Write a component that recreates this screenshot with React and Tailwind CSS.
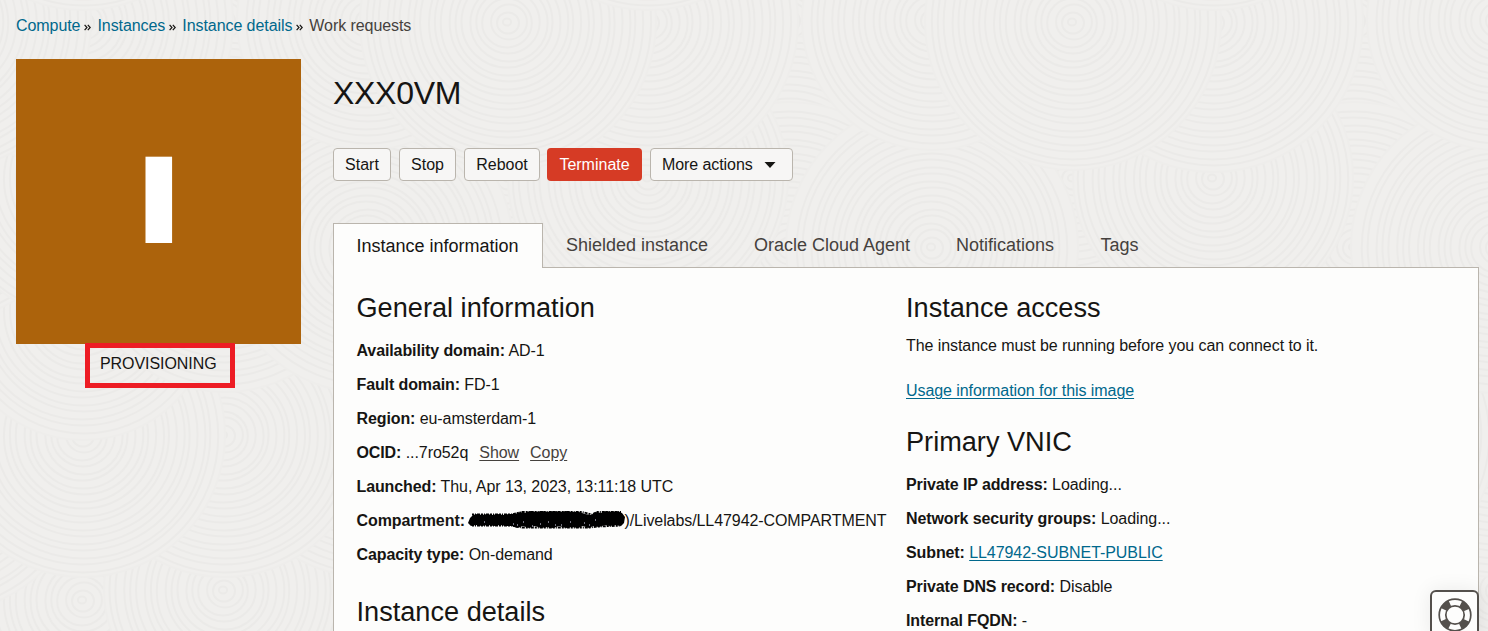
import React from "react";

const TILE_WIDTH = 565;
const TILE_DISCS = [
  [508, 690, 142], [224, 690, 142], [367, 590, 142], [83, 600, 142], [508, 470, 142],
  [508, 330, 142], [224, 590, 120], [224, 20, 140], [367, 435, 142], [224, 435, 142],
  [83, 435, 142], [83, 310, 130], [224, 178, 142], [508, 178, 142], [224, 247, 145],
  [83, 178, 140], [367, 247, 146], [367, 20, 130], [83, 22, 150], [508, 22, 148],
  [83, -138, 148],
];
const TILE_SHIFTS = [-1, 0, 1, 2];

function Backdrop() {
  return (
    <svg className="absolute inset-0 -z-10" width="1488" height="631" aria-hidden="true">
      <rect width="1488" height="631" fill="#f0efed" />
      {TILE_DISCS.flatMap(([cx, cy, r], i) =>
        TILE_SHIFTS.map((n) => {
          const x = cx + n * TILE_WIDTH;
          return (
            <g key={i + ":" + n} fill="none" stroke="#ebeae8" strokeWidth="2">
              <circle cx={x} cy={cy} r={r} fill="#f0efed" stroke="#eeedeb" />
              {Array.from({ length: Math.floor(r / 7) }, (_, k) => (
                <ellipse key={k} cx={x + (k % 3) - 1} cy={cy + (k % 2)} rx={(k + 0.6) * 6.9} ry={(k + 0.5) * 7} />
              ))}
            </g>
          );
        })
      )}
    </svg>
  );
}

function Chevrons() {
  return (
    <svg className="mt-[3px] mr-[6px] ml-1 shrink-0" width="7" height="7" viewBox="0 0 7 7" fill="none" stroke="#161513" strokeWidth="1.2" aria-hidden="true">
      <path d="M.6 .8 3 3.5 .6 6.2M3.8 .8 6.2 3.5 3.8 6.2" />
    </svg>
  );
}

function Field({ label, children }) {
  return (
    <div className="h-[34px] leading-[34px] tracking-[-0.06px] whitespace-nowrap">
      <span className="font-bold tracking-[-0.11px]">{label}:</span> {children}
    </div>
  );
}

function Heading({ children }) {
  return <h2 className="h-[34px] text-[27.15px] leading-[34px] whitespace-nowrap">{children}</h2>;
}

function Scribble() {
  return (
    <svg className="absolute top-[6px] left-[110px]" width="162" height="22" viewBox="0 0 162 22" aria-hidden="true">
      <path
        d="M1 13 3 8 6 5 10 4 15 5 20 4 25 5 31 4 36 5 42 4 48 4 53 2 58 3 63 1 69 2 75 1 81 2 87 1 94 2 99 1 105 2 112 2 118 4 124 5 129 2 134 3 139 1 145 2 150 1 155 3 158 7 157 13 154 16 148 15 143 16 138 15 132 17 126 16 122 18 116 16 111 18 105 17 99 18 92 16 86 18 80 17 74 18 68 16 62 18 56 16 50 18 45 16 39 16 33 15 27 16 21 15 15 16 9 15 4 16Z"
        fill="#000"
      />
      <path
        d="M5 4.500H45L55 2H115L125 4.500 130 2H154M5 15.500H45L55 17.500H122L130 16.500 154 15.500"
        fill="none" stroke="#000" strokeWidth="2" strokeDasharray="2 1 1 1 3 1"
      />
      <path d="M46 14h1M50 15h1M56 12h1M73 14h1M81 12h1M94 15h1M103 12h1M117 13h1M122 15h1M128 10h1M17 12h1M65 16h1M88 15h1" stroke="#e5e5ff" />
    </svg>
  );
}

function Lifebuoy() {
  return (
    <svg width="34" height="34" viewBox="0 0 34 34" fill="none" aria-hidden="true">
      <circle cx="17" cy="17" r="12.6" stroke="#54504c" strokeWidth="6.5" strokeDasharray="8.6 11.192" strokeDashoffset="-5.596" />
      <circle cx="17" cy="17" r="15.8" stroke="#54504c" strokeWidth="1.7" />
      <circle cx="17" cy="17" r="9.2" stroke="#54504c" strokeWidth="1.7" />
    </svg>
  );
}

const button = "h-[33px] rounded-[4px] border border-[#bab5ad] bg-[#f7f6f5] leading-[31px] text-center whitespace-nowrap";
const link = "text-[#00688c] underline underline-offset-[2px] decoration-1";
const tab = "text-lg leading-[44px] text-[#45413d] whitespace-nowrap";

export default function App() {
  return (
    <div className="relative isolate flex h-[631px] w-[1488px] flex-col overflow-hidden font-['Liberation_Sans',Arial,sans-serif] text-base text-[#161513]">
      <Backdrop />
      <nav className="flex h-[59px] shrink-0 items-center pb-[8px] pl-4 tracking-[-0.07px] whitespace-nowrap">
        <a className="text-[#00688c]">Compute</a>
        <Chevrons />
        <a className="text-[#00688c]">Instances</a>
        <Chevrons />
        <a className="text-[#00688c]">Instance details</a>
        <Chevrons />
        <span className="text-[#45413d]">Work requests</span>
      </nav>
      <div className="flex min-h-0 flex-1 pl-4">
        <aside className="flex w-[285px] shrink-0 flex-col items-center">
          <div className="flex h-[285px] w-full shrink-0 items-center justify-center bg-[#ac630c] pb-[10px]">
            <span className="scale-x-[1.14] font-['Open_Sans',sans-serif] text-[120px] leading-[120px] font-extrabold text-white">I</span>
          </div>
          <div className="mt-[-1px] ml-[3px] h-[45px] w-[150px] shrink-0 border-5 border-[#ed1c24] pl-[10px] leading-[31px] tracking-[-0.06px]">PROVISIONING</div>
        </aside>
        <main className="ml-8 flex w-[1146px] shrink-0 flex-col">
          <h1 className="h-[89px] shrink-0 pt-[14px] text-[32px] leading-[40px] tracking-[-0.3px]">XXX0VM</h1>
          <div className="flex h-[75px] shrink-0">
            <button className={button + " w-[58px]"}>Start</button>
            <button className={button + " ml-2 w-[57px]"}>Stop</button>
            <button className={button + " ml-2 w-[76px]"}>Reboot</button>
            <button className="ml-[7px] h-[33px] w-[95px] rounded-[4px] bg-[#d63b25] leading-[33px] text-white">Terminate</button>
            <button className={button + " ml-2 flex w-[143px] items-center pl-[11px] tracking-[-0.08px]"}>
              More actions
              <svg className="mt-[1px] ml-[11px]" width="12" height="6" viewBox="0 0 12 6" aria-hidden="true"><path d="M.5 0h11L6 6Z" fill="#161513" /></svg>
            </button>
          </div>
          <div className="z-10 flex h-[45px] shrink-0">
            <div className="w-[210px] border border-b-0 border-[#bab5ad] bg-[#fdfdfc] pl-[22.5px] text-lg leading-[44px] whitespace-nowrap">Instance information</div>
            <div className={tab + " w-[188px] pl-[23px]"}>Shielded instance</div>
            <div className={tab + " w-[202px] pl-[23px]"}>Oracle Cloud Agent</div>
            <div className={tab + " w-[145px] pl-[23px]"}>Notifications</div>
            <div className={tab + " pl-[22.5px]"}>Tags</div>
          </div>
          <section className="mt-[-1px] flex flex-1 border border-b-0 border-[#bab5ad] bg-[#fdfdfc] pl-[22.5px]">
            <div className="w-[549.5px] shrink-0 pt-[23px]">
              <Heading>General information</Heading>
              <div className="mt-[9px]">
                <Field label="Availability domain">AD-1</Field>
                <Field label="Fault domain">FD-1</Field>
                <Field label="Region">eu-amsterdam-1</Field>
                <Field label="OCID">
                  ...7ro52q
                  <a className="ml-[11px] text-[#45413d] underline underline-offset-[2px]">Show</a>
                  <a className="ml-[11px] text-[#45413d] underline underline-offset-[2px]">Copy</a>
                </Field>
                <Field label="Launched">Thu, Apr 13, 2023, 13:11:18 UTC</Field>
                <div className="relative flex h-[34px] leading-[34px] tracking-[-0.08px] whitespace-nowrap">
                  <span className="w-[268px] font-bold">Compartment:</span>
                  <Scribble />
                  <span>)/Livelabs/LL47942-COMPARTMENT</span>
                </div>
                <Field label="Capacity type">On-demand</Field>
              </div>
              <div className="mt-[23px]"><Heading>Instance details</Heading></div>
            </div>
            <div className="pt-[23px]">
              <Heading>Instance access</Heading>
              <p className="mt-[4px] h-[34px] leading-[34px] tracking-[-0.07px]">The instance must be running before you can connect to it.</p>
              <p className="mt-[11px] h-[34px] leading-[34px] tracking-[-0.07px]"><a className={link}>Usage information for this image</a></p>
              <div className="mt-[17px]"><Heading>Primary VNIC</Heading></div>
              <div className="mt-[9px]">
                <Field label="Private IP address">Loading...</Field>
                <Field label="Network security groups">Loading...</Field>
                <Field label="Subnet"><a className={link}>LL47942-SUBNET-PUBLIC</a></Field>
                <Field label="Private DNS record">Disable</Field>
                <Field label="Internal FQDN">-</Field>
              </div>
            </div>
          </section>
        </main>
      </div>
      <button aria-label="Help" className="absolute top-[590px] left-[1430px] z-20 flex h-[49px] w-[49px] items-center justify-center rounded-[6px] border-2 border-[#54504c] bg-[#fdfdfc] shadow-[0_0_20px_rgba(0,0,0,0.08)]">
        <Lifebuoy />
      </button>
    </div>
  );
}
